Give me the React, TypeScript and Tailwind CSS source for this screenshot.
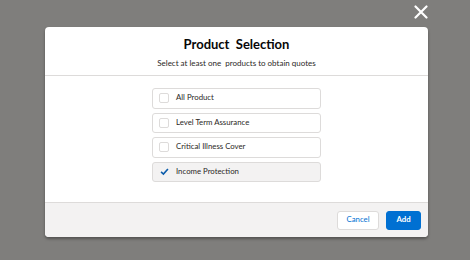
import React from 'react';

const products = [
  { label: 'All Product', checked: false },
  { label: 'Level Term Assurance', checked: false },
  { label: 'Critical Illness Cover', checked: false },
  { label: 'Income Protection', checked: true },
];

const Check = () => (
  <svg viewBox="0 0 10 10" className="h-[9px] w-[9px]">
    <path d="M1.2 5.4 L3.8 7.8 L8.8 2.2" fill="none" stroke="#0b5cab" strokeWidth="1.8" />
  </svg>
);

const App = () => {
  return (
    <div className="h-[260px] w-[470px] overflow-hidden bg-[#7f7e7c] font-['Lato',sans-serif]">
      <div className="flex h-[27px] justify-end pr-[42px] pt-[5px]">
        <svg viewBox="0 0 14 14" className="h-[14px] w-[14px]">
          <path d="M1.5 1.5 L12.5 12.5 M12.5 1.5 L1.5 12.5" stroke="white" strokeWidth="2.2" strokeLinecap="round" />
        </svg>
      </div>

      <div className="ml-[45px] flex h-[210px] w-[383px] flex-col overflow-hidden rounded-[4px] bg-white shadow-[0_2px_3px_rgba(0,0,0,0.35)]">
        <div className="flex h-[49px] flex-col items-center border-b border-[#dddbda]">
          <h1 className="mt-[8px] text-[13px] font-bold leading-[18px] text-[#080707]">Product&nbsp; Selection</h1>
          <p className="mt-[4px] text-[8px] leading-[12px] text-[#2b2826]">Select at least one&nbsp; products to obtain quotes</p>
        </div>

        <div className="flex flex-1 flex-col items-center gap-[4px] pt-[12px]">
          {products.map((p) => (
            <div
              key={p.label}
              className={`flex h-[20.5px] w-[169px] items-center rounded-[3px] border border-[#dddbda] pl-[6px] ${p.checked ? 'bg-[#f3f2f2]' : 'bg-white'}`}
            >
              <span className={`flex h-[10px] w-[10px] items-center justify-center rounded-[2px] ${p.checked ? '' : 'border border-[#dddbda] bg-white'}`}>
                {p.checked && <Check />}
              </span>
              <span className="ml-[7px] text-[7.8px] text-[#2b2826]">{p.label}</span>
            </div>
          ))}
        </div>

        <div className="flex h-[35px] items-center justify-end gap-[7px] border-t border-[#dddbda] bg-[#f3f2f2] pr-[7px]">
          <button className="h-[19px] w-[42px] rounded-[3px] border border-[#dddbda] bg-white text-[7.8px] text-[#0070d2]">Cancel</button>
          <button className="h-[19px] w-[35px] rounded-[3px] border border-[#0070d2] bg-[#0070d2] text-[7.8px] font-bold text-white">Add</button>
        </div>
      </div>
    </div>
  );
};

export default App;
